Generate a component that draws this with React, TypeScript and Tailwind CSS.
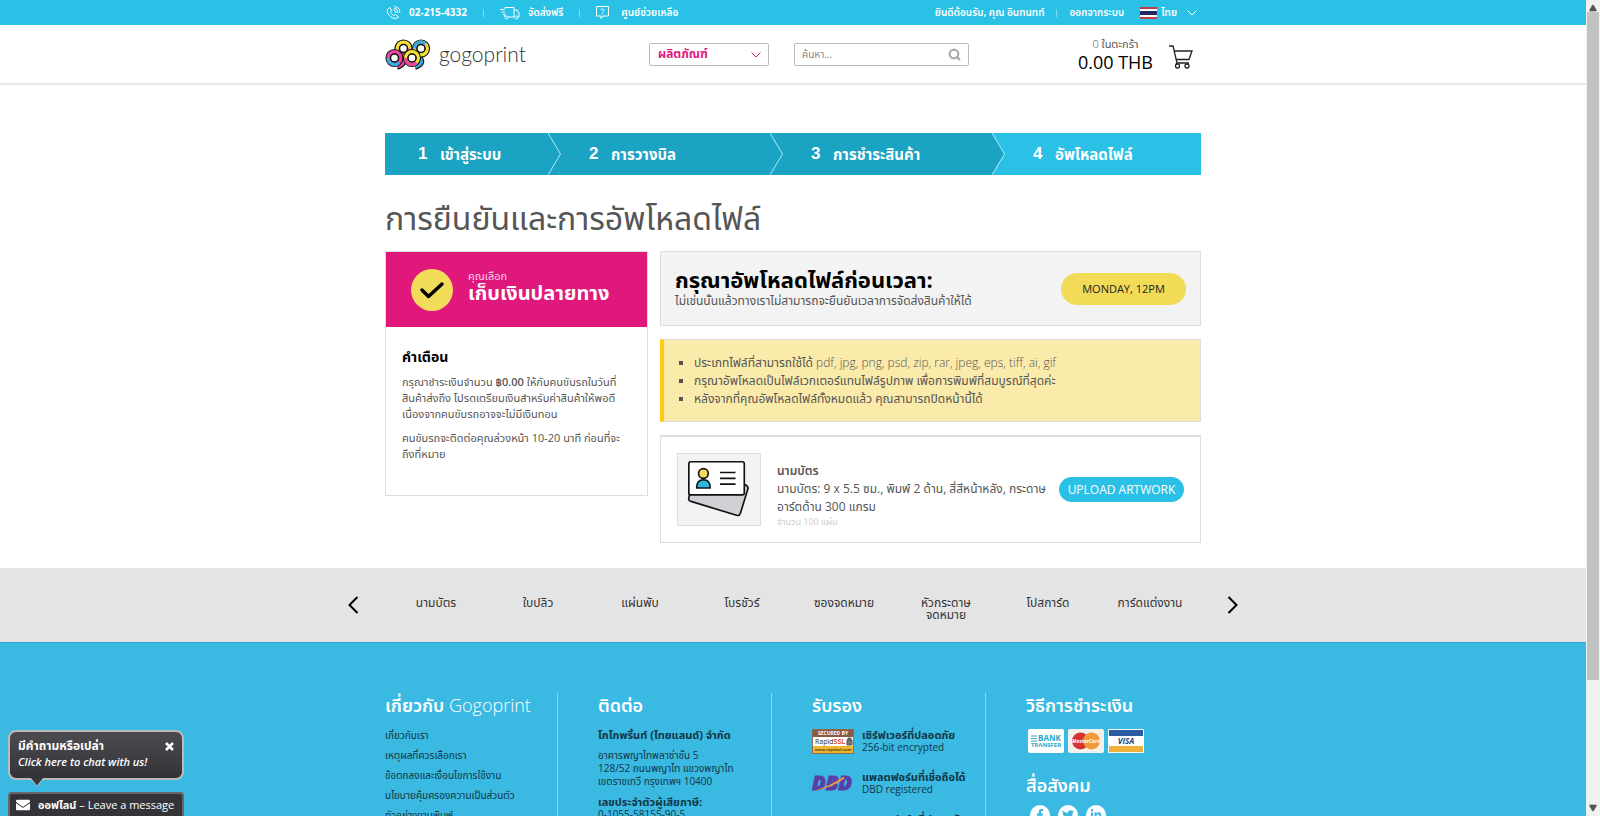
import type { ReactNode } from "react";
import { Search, Triangle } from "lucide-react";
import { FaFacebookF, FaTwitter, FaLinkedinIn, FaEnvelope } from "react-icons/fa";

const products = ["นามบัตร", "ใบปลิว", "แผ่นพับ", "โบรชัวร์", "ซองจดหมาย", "หัวกระดาษจดหมาย", "โปสการ์ด", "การ์ดแต่งงาน"];

const aboutLinks = [
    "เกี่ยวกับเรา",
    "เหตุผลที่ควรเลือกเรา",
    "ข้อตกลงและเงื่อนไขการใช้งาน",
    "นโยบายคุ้มครองความเป็นส่วนตัว",
    "ตัวอย่างงานพิมพ์",
];

export default function App() {
    return (
        <div className="flex h-screen overflow-hidden bg-white font-['Open_Sans','Noto_Sans_Thai',Tahoma,sans-serif] text-[#555]">
            <div className="flex-1 min-w-0 relative overflow-hidden">
                <TopBar />
                <Header />
                <main className="w-full max-w-[816px] mx-auto pt-12 pb-[25px]">
                    <Steps />
                    <h1 className="mt-[23px] mb-[13px] text-[32px] leading-10 text-[#555]">การยืนยันและการอัพโหลดไฟล์</h1>
                    <div className="flex items-start gap-3">
                        <PaymentCard />
                        <div className="flex-1 flex flex-col gap-[13px]">
                            <Deadline />
                            <FileNotes />
                            <OrderItem />
                        </div>
                    </div>
                </main>
                <ProductBar />
                <Footer />
                <ChatWidget />
            </div>
            <Scrollbar />
        </div>
    );
}

function TopBar() {
    return (
        <div className="bg-[#29c1e5] text-white text-[10px] leading-[25px] font-semibold">
            <div className="w-full max-w-[816px] mx-auto h-[25px] flex items-center justify-between">
                <div className="flex items-center whitespace-nowrap">
                    <PhoneIcon />
                    <a href="#" className="ml-2 font-bold">02-215-4332</a>
                    <Divider />
                    <TruckIcon />
                    <a href="#" className="ml-2">จัดส่งฟรี</a>
                    <Divider />
                    <HelpIcon />
                    <a href="#" className="ml-3">ศูนย์ช่วยเหลือ</a>
                </div>
                <div className="flex items-center whitespace-nowrap">
                    <a href="#">ยินดีต้อนรับ, คุณ อินทนทท์</a>
                    <span className="w-px h-2 mx-3 bg-[#7fdcf2]" />
                    <a href="#">ออกจากระบบ</a>
                    <button className="ml-4 mr-1 flex items-center">
                        <span className="w-[17px] h-3 mr-1 flex flex-col bg-white">
                            <span className="h-0.5 bg-[#c33a4b]" />
                            <span className="h-1 my-0.5 bg-[#25276b]" />
                            <span className="h-0.5 bg-[#c33a4b]" />
                        </span>
                        ไทย
                        <SmallChevron className="ml-2.5" />
                    </button>
                </div>
            </div>
        </div>
    );
}

function Divider() {
    return <span className="w-px h-2 mx-4 bg-[#7fdcf2]" />;
}

function SmallChevron({ className }: { className: string }) {
    return (
        <svg className={className} width="10" height="6" viewBox="0 0 10 6">
            <path d="M.5.5L5 5L9.500.5" fill="none" stroke="currentColor" />
        </svg>
    );
}

function Header() {
    return (
        <header className="border-b-2 border-[#e8e8e8]">
            <div className="w-full max-w-[816px] mx-auto h-[58px] flex items-center">
                <a href="#" className="flex items-center gap-2 w-[264px]">
                    <Logo />
                    <span className="font-[Lato,sans-serif] font-light text-[21px] leading-7 text-[#333]">gogoprint</span>
                </a>
                <div className="relative w-[120px]">
                    <select aria-label="ผลิตภัณฑ์" className="block appearance-none w-full h-[23px] px-2 rounded-xs border border-[#bbb] text-xs leading-5 font-bold text-[#e0187c]">
                        <option>ผลิตภัณฑ์</option>
                    </select>
                    <SmallChevron className="absolute right-2 top-[9px] text-[#e0187c]" />
                </div>
                <form className="ml-[25px] w-[175px] h-[23px] px-[7px] flex items-center rounded-xs border border-[#bbb]">
                    <input aria-label="ค้นหา" placeholder="ค้นหา..." className="flex-1 min-w-0 text-[10px] leading-5 outline-none placeholder:text-[#888]" />
                    <button aria-label="ค้นหา">
                        <Search className="w-[13px] h-[13px] text-[#aaa]" strokeWidth={4} />
                    </button>
                </form>
                <a href="#" className="ml-auto mr-2 flex items-center gap-4">
                    <span className="text-center">
                        <span className="block text-[11px] leading-4"><span className="font-light">0</span> ในตะกร้า</span>
                        <span className="block text-lg leading-5 text-black">0.00 THB</span>
                    </span>
                    <CartIcon />
                </a>
            </div>
        </header>
    );
}

function Steps() {
    return (
        <ol className="flex h-[42px] bg-[#1ba3c3] text-white font-bold">
            <li className="w-[163px] pl-[33px] flex items-center"><StepLabel number="1" label="เข้าสู่ระบบ" /></li>
            <Chevron />
            <li className="flex-1 pl-7 flex items-center"><StepLabel number="2" label="การวางบิล" /></li>
            <Chevron />
            <li className="flex-1 pl-7 flex items-center"><StepLabel number="3" label="การชำระสินค้า" /></li>
            <Chevron active />
            <li className="w-[196px] pl-7 flex items-center bg-[#2bc1e6]"><StepLabel number="4" label="อัพโหลดไฟล์" /></li>
        </ol>
    );
}

function StepLabel({ number, label }: { number: string, label: string }) {
    return (
        <>
            <span className="w-[22px] font-['Liberation_Sans',sans-serif] text-[17px]">{number}</span>
            <span className="text-[15px]">{label}</span>
        </>
    );
}

function Chevron({ active }: { active?: boolean }) {
    return (
        <li aria-hidden="true" className="w-[13px]">
            <svg width="13" height="42" viewBox="0 0 13 42">
                {active && <path d="M0 0H13V42H0L12.500 21Z" fill="#2bc1e6" />}
                <path d="M0 0L12.500 21L0 42" fill="none" stroke="#b5e9f5" />
            </svg>
        </li>
    );
}

function PaymentCard() {
    return (
        <section className="w-[263px] h-[245px] border border-[#ddd]">
            <div className="h-[75px] pl-[25px] flex items-center gap-[15px] bg-[#e0187c] text-white">
                <svg width="42" height="42" viewBox="0 0 42 42">
                    <circle cx="21" cy="21" r="21" fill="#f2dc5a" />
                    <path d="M11 21L17.500 27.500L31 15" fill="none" stroke="#000" strokeWidth="3.500" strokeLinecap="round" strokeLinejoin="round" />
                </svg>
                <div className="pb-2">
                    <div className="text-[11px] leading-[14px] text-[#fbd0e5]">คุณเลือก</div>
                    <div className="text-xl leading-5 font-bold">เก็บเงินปลายทาง</div>
                </div>
            </div>
            <div className="px-4 pt-5 text-[11px] leading-4">
                <h2 className="mb-[7px] text-sm leading-5 font-bold text-black">คำเตือน</h2>
                <p className="mb-2">
                    กรุณาชำระเงินจำนวน <b className="font-semibold">฿0.00</b> ให้กับคนขับรถในวันที่<br />
                    สินค้าส่งถึง โปรดเตรียมเงินสำหรับค่าสินค้าให้พอดี<br />
                    เนื่องจากคนขับรถอาจจะไม่มีเงินทอน
                </p>
                <p>
                    คนขับรถจะติดต่อคุณล่วงหน้า 10-20 นาที ก่อนที่จะ<br />
                    ถึงที่หมาย
                </p>
            </div>
        </section>
    );
}

function Deadline() {
    return (
        <section className="h-[75px] px-[14px] flex items-center justify-between bg-[#f3f3f3] border border-[#ddd]">
            <div>
                <h2 className="text-[22px] leading-6 font-bold text-black">กรุณาอัพโหลดไฟล์ก่อนเวลา:</h2>
                <p className="text-xs leading-5">ไม่เช่นนั้นแล้วทางเราไม่สามารถจะยืนยันเวลาการจัดส่งสินค้าให้ได้</p>
            </div>
            <span className="w-[125px] rounded-full bg-[#f1db57] text-center text-[11px] leading-8 text-[#222]">MONDAY, 12PM</span>
        </section>
    );
}

function FileNotes() {
    return (
        <section className="h-[83px] pl-[30px] flex items-center bg-[#fbebab] border border-[#ddd] border-l-4 border-l-[#fdcc0d]">
            <ul className="list-[square] text-xs leading-[18px]">
                <li>ประเภทไฟล์ที่สามารถใช้ได้ <span className="font-light">pdf, jpg, png, psd, zip, rar, jpeg, eps, tiff, ai, gif</span></li>
                <li>กรุณาอัพโหลดเป็นไฟล์เวกเตอร์แทนไฟล์รูปภาพ เพื่อการพิมพ์ที่สมบูรณ์ที่สุดค่ะ</li>
                <li>หลังจากที่คุณอัพโหลดไฟล์ทั้งหมดแล้ว คุณสามารถปิดหน้านี้ได้</li>
            </ul>
        </section>
    );
}

function OrderItem() {
    return (
        <section className="h-[108px] px-4 flex items-center border border-t-2 border-[#ddd]">
            <BusinessCards />
            <div className="ml-4 pt-[10px] flex-1 whitespace-nowrap">
                <h3 className="text-xs leading-[18px] font-semibold">นามบัตร</h3>
                <p className="text-xs leading-[18px]">
                    นามบัตร: 9 x 5.5 ซม., พิมพ์ 2 ด้าน, สี่สีหน้าหลัง, กระดาษ<br />
                    อาร์ตด้าน 300 แกรม
                </p>
                <p className="text-[9px] leading-3 text-[#ccc]">จำนวน 100 แผ่น</p>
            </div>
            <button className="w-[125px] rounded-full bg-[#2bc1e6] text-xs leading-[25px] text-white">UPLOAD ARTWORK</button>
        </section>
    );
}

function ProductBar() {
    return (
        <nav className="h-[74px] flex items-center justify-center bg-[#e4e4e4]">
            <button aria-label="ก่อนหน้า"><Arrow d="M9.500 1L1.500 9L9.500 17" /></button>
            <ul className="mx-[26px] pt-2 w-full max-w-[816px] grid grid-cols-8 text-xs leading-3 text-[#333]">
                {products.map((name) => (
                    <li key={name} className="px-3 text-center">
                        <a href="#" className="block">{name}</a>
                    </li>
                ))}
            </ul>
            <button aria-label="ถัดไป"><Arrow d="M1.500 1L9.500 9L1.500 17" /></button>
        </nav>
    );
}

function Arrow({ d }: { d: string }) {
    return (
        <svg width="11" height="18" viewBox="0 0 11 18">
            <path d={d} fill="none" stroke="#000" strokeWidth="2" />
        </svg>
    );
}

function Footer() {
    return (
        <footer className="border-t border-[#2ba8d0] bg-[#3ab9e2] text-[#123645]">
            <div className="w-full max-w-[816px] mx-auto pt-[50px] flex">
                <FooterColumn title={<>เกี่ยวกับ <span className="font-light">Gogoprint</span></>}>
                    <ul className="text-[10px] leading-5">
                        {aboutLinks.map((link) => (
                            <li key={link}><a href="#">{link}</a></li>
                        ))}
                    </ul>
                </FooterColumn>
                <FooterColumn title="ติดต่อ" divided>
                    <div className="text-[11px] leading-[13px] whitespace-nowrap">
                        <div className="leading-5 font-bold">โกโกพริ้นท์ (ไทยแลนด์) จำกัด</div>
                        <p className="mt-1 mb-[7px] text-[10px]">
                            อาคารพญาไทพลาซ่าชั้น 5<br />
                            128/52 ถนนพญาไท แขวงพญาไท<br />
                            เขตราชเทวี กรุงเทพฯ 10400
                        </p>
                        <div className="font-bold">เลขประจำตัวผู้เสียภาษี:</div>
                        <div className="text-[10px]">0-1055-58155-90-5</div>
                    </div>
                </FooterColumn>
                <FooterColumn title="รับรอง" divided>
                    <div className="pt-[3px] flex flex-col gap-4 text-[11px] leading-[13px] whitespace-nowrap">
                        <Badge title="เซิร์ฟเวอร์ที่ปลอดภัย" text="256-bit encrypted"><RapidSsl /></Badge>
                        <Badge title="แพลตฟอร์มที่เชื่อถือได้" text="DBD registered"><Dbd /></Badge>
                        <Badge title="แพลตฟอร์มที่ปลอดภัย" text="Secure platform"><span className="w-[42px]" /></Badge>
                    </div>
                </FooterColumn>
                <FooterColumn title="วิธีการชำระเงิน" divided>
                    <div className="pt-1 pl-0.5 flex gap-1"><PaymentLogos /></div>
                    <h2 className="mt-5 mb-2 text-lg leading-6 font-semibold text-white">สื่อสังคม</h2>
                    <div className="flex gap-2 pl-1 text-[#3ab9e2]">
                        <a href="#" aria-label="Facebook" className="w-5 h-5 flex items-center justify-center rounded-full bg-white"><FaFacebookF size={12} /></a>
                        <a href="#" aria-label="Twitter" className="w-5 h-5 flex items-center justify-center rounded-full bg-white"><FaTwitter size={12} /></a>
                        <a href="#" aria-label="LinkedIn" className="w-5 h-5 flex items-center justify-center rounded-full bg-white"><FaLinkedinIn size={12} /></a>
                    </div>
                </FooterColumn>
            </div>
        </footer>
    );
}

function FooterColumn({ title, divided, children }: { title: ReactNode, divided?: boolean, children: ReactNode }) {
    return (
        <section className={divided ? "w-[214px] h-[240px] pl-10 border-l border-[#8fd6ee]" : "w-[172px] h-[240px]"}>
            <h2 className="mb-2 text-lg leading-6 font-semibold text-white whitespace-nowrap">{title}</h2>
            {children}
        </section>
    );
}

function Badge({ title, text, children }: { title: string, text: string, children: ReactNode }) {
    return (
        <div className="flex items-center gap-2">
            {children}
            <div>
                <div className="font-bold">{title}</div>
                <div className="text-[10px]">{text}</div>
            </div>
        </div>
    );
}

function ChatWidget() {
    return (
        <aside className="absolute left-2 bottom-0 w-[176px] text-white">
            <div className="mb-3 h-[50px] px-2 pt-1.5 relative rounded-lg border-2 border-[#bbb] bg-linear-to-b from-[#4c4c50] to-[#343438] text-xs leading-4">
                <div className="flex justify-between items-center font-bold">
                    มีคำถามหรือเปล่า
                    <button aria-label="ปิด">
                        <svg width="9" height="9" viewBox="0 0 9 9"><path d="M1 1L8 8M8 1L1 8" stroke="#fff" strokeWidth="2.500" /></svg>
                    </button>
                </div>
                <a href="#" className="block text-[11px] italic font-semibold whitespace-nowrap">Click here to chat with us!</a>
                <svg className="absolute left-5 top-[46px]" width="14" height="9" viewBox="0 0 14 9">
                    <path d="M1 0H13L7 8Z" fill="#38383c" />
                    <path d="M1 1L7 8L13 1" fill="none" stroke="#bbb" />
                </svg>
            </div>
            <button className="w-full h-6 pl-1.5 flex items-center gap-2 rounded-t border-2 border-b-0 border-[#666] bg-[#343438] text-[11px] leading-5 whitespace-nowrap">
                <FaEnvelope size={14} className="shrink-0" />
                <span><b>ออฟไลน์</b> – Leave a message</span>
            </button>
        </aside>
    );
}

function Scrollbar() {
    return (
        <div aria-hidden="true" className="w-[14px] flex flex-col items-center justify-between py-1 bg-[#f1f1f1]">
            <Triangle className="w-2 h-2 text-[#555]" fill="#555" />
            <div className="w-3 grow-0 basis-[668px] bg-[#c1c1c1]" />
            <div className="flex-1" />
            <Triangle className="w-2 h-2 rotate-180 text-[#555]" fill="#555" />
        </div>
    );
}

function Ring({ cx, cy, color, second, arc }: { cx: number, cy: number, color: string, second: string, arc: string }) {
    return (
        <g>
            <circle cx={cx} cy={cy} r="6.300" stroke="#111" strokeWidth="5.600" />
            <circle cx={cx} cy={cy} r="6.300" stroke={color} strokeWidth="3.400" />
            <path d={arc} stroke={second} strokeWidth="3.400" />
            <circle cx={cx} cy={cy} r="4" fill="#fff" stroke="#111" strokeWidth="1.500" />
        </g>
    );
}

function Logo() {
    return (
        <svg width="46" height="31" viewBox="0 0 46 31" fill="none">
            <path d="M17 19C20 23 18 26 12 28M35 19C38 23 36 26 30 28" stroke="#111" strokeWidth="5.600" />
            <path d="M17 19C20 23 18 26 12 28" stroke="#e8469f" strokeWidth="3.400" />
            <path d="M35 19C38 23 36 26 30 28" stroke="#3aa9dd" strokeWidth="3.400" />
            <Ring cx={18.5} cy={9.5} color="#f4de3b" second="#e8469f" arc="M24.800 9.500a6.300 6.300 0 0 1-12 2.500" />
            <Ring cx={36} cy={9.5} color="#f4de3b" second="#3aa9dd" arc="M29.700 9.500a6.300 6.300 0 0 1 10.800-4.500" />
            <Ring cx={9.5} cy={19} color="#e8469f" second="#3aa9dd" arc="M3.200 19a6.300 6.300 0 0 0 10.800 4.500" />
            <Ring cx={27} cy={19} color="#f4de3b" second="#e8469f" arc="M20.700 19a6.300 6.300 0 0 0 10.800 4.500" />
        </svg>
    );
}

function PhoneIcon() {
    return (
        <svg width="16" height="14" viewBox="0 0 16 14" fill="none" stroke="currentColor">
            <path d="M5 1.500L2.500 3C1 7 6 13 11 12.500L13.500 11L10.500 8.500L9 9.500C7 8.500 6 7 5.500 5.500L6.500 4.500ZM8.500 4Q11 4.500 11 7M9 2Q13 2.500 13 7M9.500.5Q15 1 14.800 7" />
        </svg>
    );
}

function TruckIcon() {
    return (
        <svg width="20" height="14" viewBox="0 0 20 14" fill="none" stroke="currentColor">
            <path d="M5 3.500V1.500H14V11H8M14 4H17L19 7V11H18M0 3.500H4M1.500 6H5M3 8.500H5M5 8V11" />
            <circle cx="6.500" cy="11.500" r="1.500" />
            <circle cx="16.500" cy="11.500" r="1.500" />
        </svg>
    );
}

function HelpIcon() {
    return (
        <svg width="13" height="13" viewBox="0 0 13 13" fill="none" stroke="currentColor">
            <path d="M.5.5H12.500V10H7L5 12.500V10H.5ZM5 4Q5 3 6.500 3T8 4.500Q7.800 5.500 6.500 6M6.500 7.500V8.500" />
        </svg>
    );
}

function CartIcon() {
    return (
        <svg className="mt-1.5" width="24" height="24" viewBox="0 0 24 24" fill="none" stroke="#222" strokeWidth="1.300">
            <path d="M0 1H4L8 18H20M5.500 6H23L20 14.500H7.500M8 18L7 19" />
            <circle cx="8.500" cy="21" r="2" />
            <circle cx="18" cy="21" r="2" />
        </svg>
    );
}

function BusinessCards() {
    return (
        <svg className="border border-[#ddd] bg-[#f3f3f3]" width="84" height="73" viewBox="0 0 84 73" stroke="#111" strokeWidth="1.700" strokeLinejoin="round">
            <path d="M12 40L11 45Q10 48 14 49L60 63Q63 64 64 61L72 35Q72 33 68 31Z" fill="#cfd1d4" />
            <rect x="11" y="8" width="57" height="34" rx="2" fill="#fff" />
            <circle cx="26" cy="20" r="5" fill="#f2dc5a" />
            <path d="M19 35Q19 26.500 26 26.500T33 35Z" fill="#29b8df" />
            <path d="M43 19H59M43 25H59M43 31H59" />
        </svg>
    );
}

function RapidSsl() {
    return (
        <svg width="42" height="25" viewBox="0 0 42 25">
            <rect width="42" height="25" fill="#fff" />
            <rect width="42" height="8" fill="#8b5a43" />
            <rect y="17" width="42" height="8" fill="#eeb62f" />
            <rect x=".5" y=".5" width="41" height="24" fill="none" stroke="#8b6b52" />
            <text x="21" y="6" fontSize="5" fontWeight="bold" textAnchor="middle" fill="#fff">SECURED BY</text>
            <text x="3" y="15" fontSize="7" fill="#333">Rapid<tspan fill="#e2572b" fontWeight="bold">SSL</tspan></text>
            <path d="M35 11H40V16H35ZM36 11V9H39V11" fill="#777" stroke="#555" />
            <text x="21" y="22" fontSize="4" fontWeight="bold" textAnchor="middle" fill="#5c4412">www.rapidssl.com</text>
        </svg>
    );
}

function Dbd() {
    return (
        <svg width="42" height="20" viewBox="0 0 42 20">
            <text x="20" y="17" fontSize="20" fontWeight="800" fontStyle="italic" textAnchor="middle" fill="#5b3fa8" stroke="#5b3fa8">DBD</text>
            <path d="M2 18Q20 12 31 4L33 5Q22 14 2 18Z" fill="#f29a3f" />
        </svg>
    );
}

function PaymentLogos() {
    return (
        <>
            <svg width="36" height="24" viewBox="0 0 36 24">
                <rect width="36" height="24" rx="2" fill="#fff" />
                <path d="M3 7H9M3 9.500H9M3 12H9" stroke="#27a9c9" />
                <text x="10" y="12" fontSize="8" fontWeight="bold" fill="#27a9c9">BANK</text>
                <text x="18" y="18" fontSize="6" fontWeight="bold" textAnchor="middle" fill="#27a9c9">TRANSFER</text>
            </svg>
            <svg width="36" height="24" viewBox="0 0 36 24">
                <rect width="36" height="24" rx="2" fill="#f4f1ec" />
                <circle cx="12.500" cy="12" r="8.500" fill="#d6322f" />
                <circle cx="23.500" cy="12" r="8.500" fill="#f09a3a" />
                <text x="18" y="14" fontSize="5" fontWeight="bold" fontStyle="italic" textAnchor="middle" fill="#fff">MasterCard</text>
            </svg>
            <svg width="36" height="24" viewBox="0 0 36 24">
                <rect width="36" height="24" rx="1" fill="#fff" />
                <rect x="1" y="1" width="34" height="6" fill="#2a5ba4" />
                <rect x="1" y="17" width="34" height="6" fill="#efb13c" />
                <text x="18" y="15" fontSize="8" fontWeight="bold" fontStyle="italic" textAnchor="middle" fill="#25477f">VISA</text>
            </svg>
        </>
    );
}
